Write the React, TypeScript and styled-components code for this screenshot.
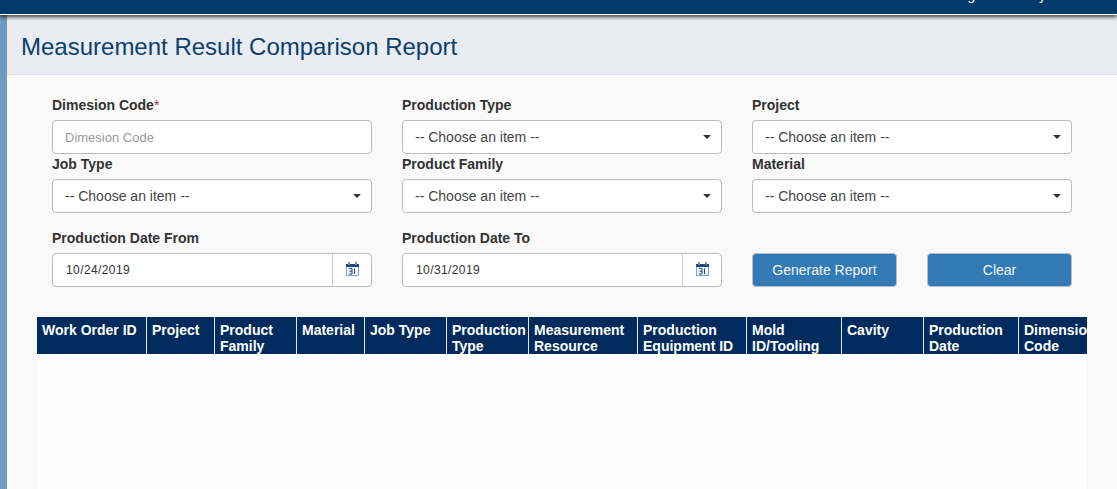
import React from 'react';
import styled, { createGlobalStyle } from 'styled-components';

const Global = createGlobalStyle`
  html, body {
    margin: 0;
    padding: 0;
    height: 489px;
    overflow: hidden;
    background: #f9f9f9;
    font-family: "Liberation Sans", Arial, sans-serif;
  }
  * { box-sizing: border-box; }
`;

const Shell = styled.div`
  width: 1117px;
  height: 489px;
  overflow: hidden;
  display: flex;
  flex-direction: column;
`;

const TopBar = styled.header`
  flex: none;
  height: 15px;
  background: #023a6b;
  border-bottom: 1px solid #fff;
  box-shadow: 0 2px 4px rgba(0, 0, 0, 0.75);
  position: relative;
  z-index: 2;
  overflow: hidden;
  display: flex;
  justify-content: flex-end;
  align-items: flex-end;
  padding: 0 71px 11px 0;
`;

const UserName = styled.span`
  color: #fff;
  font-size: 14px;
  line-height: 16px;
  word-spacing: 3px;
`;

const Body = styled.div`
  flex: 1;
  display: flex;
  min-height: 0;
`;

const SideRail = styled.aside`
  flex: none;
  width: 7px;
  background: #6f9bc1;
`;

const Main = styled.main`
  flex: 1;
  min-width: 0;
  background: #f9f9f9;
`;

const PageHeader = styled.div`
  height: 60px;
  background: #e9ecf1;
  border-bottom: 1px solid #e0e2e6;
  padding: 16px 14px 0;
`;

const PageTitle = styled.h1`
  margin: 0;
  font-size: 24px;
  line-height: 32px;
  font-weight: 400;
  color: #0b3f6e;
`;

const FormGrid = styled.div`
  display: grid;
  grid-template-columns: 320px 320px 320px;
  column-gap: 30px;
  padding: 22px 0 0 45px;
`;

const Field = styled.div<{ $height: number }>`
  height: ${(p) => p.$height}px;
`;

const Label = styled.label`
  display: block;
  font-size: 14px;
  line-height: 16px;
  font-weight: 700;
  color: #333;
  margin-bottom: 7px;
`;

const Required = styled.span`
  color: #c7254e;
  font-weight: 400;
`;

const TextInput = styled.div`
  height: 34px;
  background: #fff;
  border: 1px solid #bbb;
  border-radius: 4px;
  padding: 0 12px;
  font-size: 13px;
  line-height: 33px;
  color: #999;
`;

const SelectBox = styled(TextInput)`
  display: flex;
  align-items: center;
  justify-content: space-between;
  font-size: 14px;
  color: #444;
  padding-right: 10px;
`;

const Caret = styled.span`
  width: 0;
  height: 0;
  border-left: 4px solid transparent;
  border-right: 4px solid transparent;
  border-top: 4px solid #333;
`;

const DateGroup = styled.div`
  display: flex;
  height: 34px;
  background: #fff;
  border: 1px solid #bbb;
  border-radius: 4px;
`;

const DateValue = styled.div`
  flex: 1;
  padding: 0 13px;
  font-size: 12px;
  letter-spacing: 0.4px;
  line-height: 33px;
  color: #333;
`;

const CalendarAddon = styled.div`
  flex: none;
  width: 39px;
  border-left: 1px solid #ccc;
  padding-bottom: 2px;
  display: flex;
  align-items: center;
  justify-content: center;
`;

const Actions = styled.div`
  display: flex;
  justify-content: space-between;
  padding-top: 23px;
`;

const ActionButton = styled.button`
  width: 145px;
  height: 34px;
  background: #337ab7;
  border: 1px solid #b4bcc4;
  border-radius: 4px;
  color: #f2f6fa;
  font-family: inherit;
  font-size: 14px;
  padding: 0;
`;

const TableArea = styled.div`
  margin: 30px 0 0 30px;
  width: 1050px;
  background: #fefefe;
  height: 172px;
  overflow: hidden;
`;

const HeadRow = styled.div`
  display: flex;
  height: 37px;
  background: #002b5c;
`;

const HeadCell = styled.div<{ $width: number }>`
  flex: none;
  width: ${(p) => p.$width}px;
  height: 37px;
  border-right: 1px solid #e4e8ee;
  padding: 5px 5px 0 5px;
  font-size: 14px;
  line-height: 16px;
  font-weight: 700;
  color: #fff;
  &:last-child {
    border-right: 0;
    padding-right: 0;
    overflow: hidden;
  }
`;

const columns: [string, number][] = [
  ['Work Order ID', 110],
  ['Project', 68],
  ['Product Family', 82],
  ['Material', 68],
  ['Job Type', 82],
  ['Production Type', 82],
  ['Measurement Resource', 109],
  ['Production Equipment ID', 109],
  ['Mold ID/Tooling ID', 95],
  ['Cavity', 82],
  ['Production Date', 95],
  ['Dimension Code', 68],
];

function CalendarIcon(): JSX.Element {
  return (
    <svg width="13" height="14" viewBox="0 0 13 14" aria-hidden="true">
      <rect x="0.5" y="2.5" width="12" height="11" fill="#eef4f9" stroke="#6fa8d6" />
      <rect x="0" y="2" width="13" height="3" fill="#1d4a78" />
      <rect x="2" y="0" width="2" height="3" fill="#7d8aa0" />
      <rect x="9" y="0" width="2" height="3" fill="#7d8aa0" />
      <path d="M3 6.5h3v5.5H3M3.5 9.2H6M8.5 6.5v5.5" stroke="#1d4a78" strokeWidth="1" fill="none" />
    </svg>
  );
}

function Select(): JSX.Element {
  return (
    <SelectBox>
      -- Choose an item --
      <Caret />
    </SelectBox>
  );
}

function DateInput({ value }: { value: string }): JSX.Element {
  return (
    <DateGroup>
      <DateValue>{value}</DateValue>
      <CalendarAddon>
        <CalendarIcon />
      </CalendarAddon>
    </DateGroup>
  );
}

export default function App(): JSX.Element {
  return (
    <Shell>
      <Global />
      <TopBar>
        <UserName>Regina Hendry</UserName>
      </TopBar>
      <Body>
        <SideRail />
        <Main>
          <PageHeader>
            <PageTitle>Measurement Result Comparison Report</PageTitle>
          </PageHeader>

          <FormGrid>
            <Field $height={59}>
              <Label>
                Dimesion Code<Required>*</Required>
              </Label>
              <TextInput>Dimesion Code</TextInput>
            </Field>
            <Field $height={59}>
              <Label>Production Type</Label>
              <Select />
            </Field>
            <Field $height={59}>
              <Label>Project</Label>
              <Select />
            </Field>

            <Field $height={74}>
              <Label>Job Type</Label>
              <Select />
            </Field>
            <Field $height={74}>
              <Label>Product Family</Label>
              <Select />
            </Field>
            <Field $height={74}>
              <Label>Material</Label>
              <Select />
            </Field>

            <Field $height={57}>
              <Label>Production Date From</Label>
              <DateInput value="10/24/2019" />
            </Field>
            <Field $height={57}>
              <Label>Production Date To</Label>
              <DateInput value="10/31/2019" />
            </Field>
            <Actions>
              <ActionButton>Generate Report</ActionButton>
              <ActionButton>Clear</ActionButton>
            </Actions>
          </FormGrid>

          <TableArea>
            <HeadRow>
              {columns.map(([name, width]) => (
                <HeadCell key={name} $width={width}>
                  {name}
                </HeadCell>
              ))}
            </HeadRow>
          </TableArea>
        </Main>
      </Body>
    </Shell>
  );
}
